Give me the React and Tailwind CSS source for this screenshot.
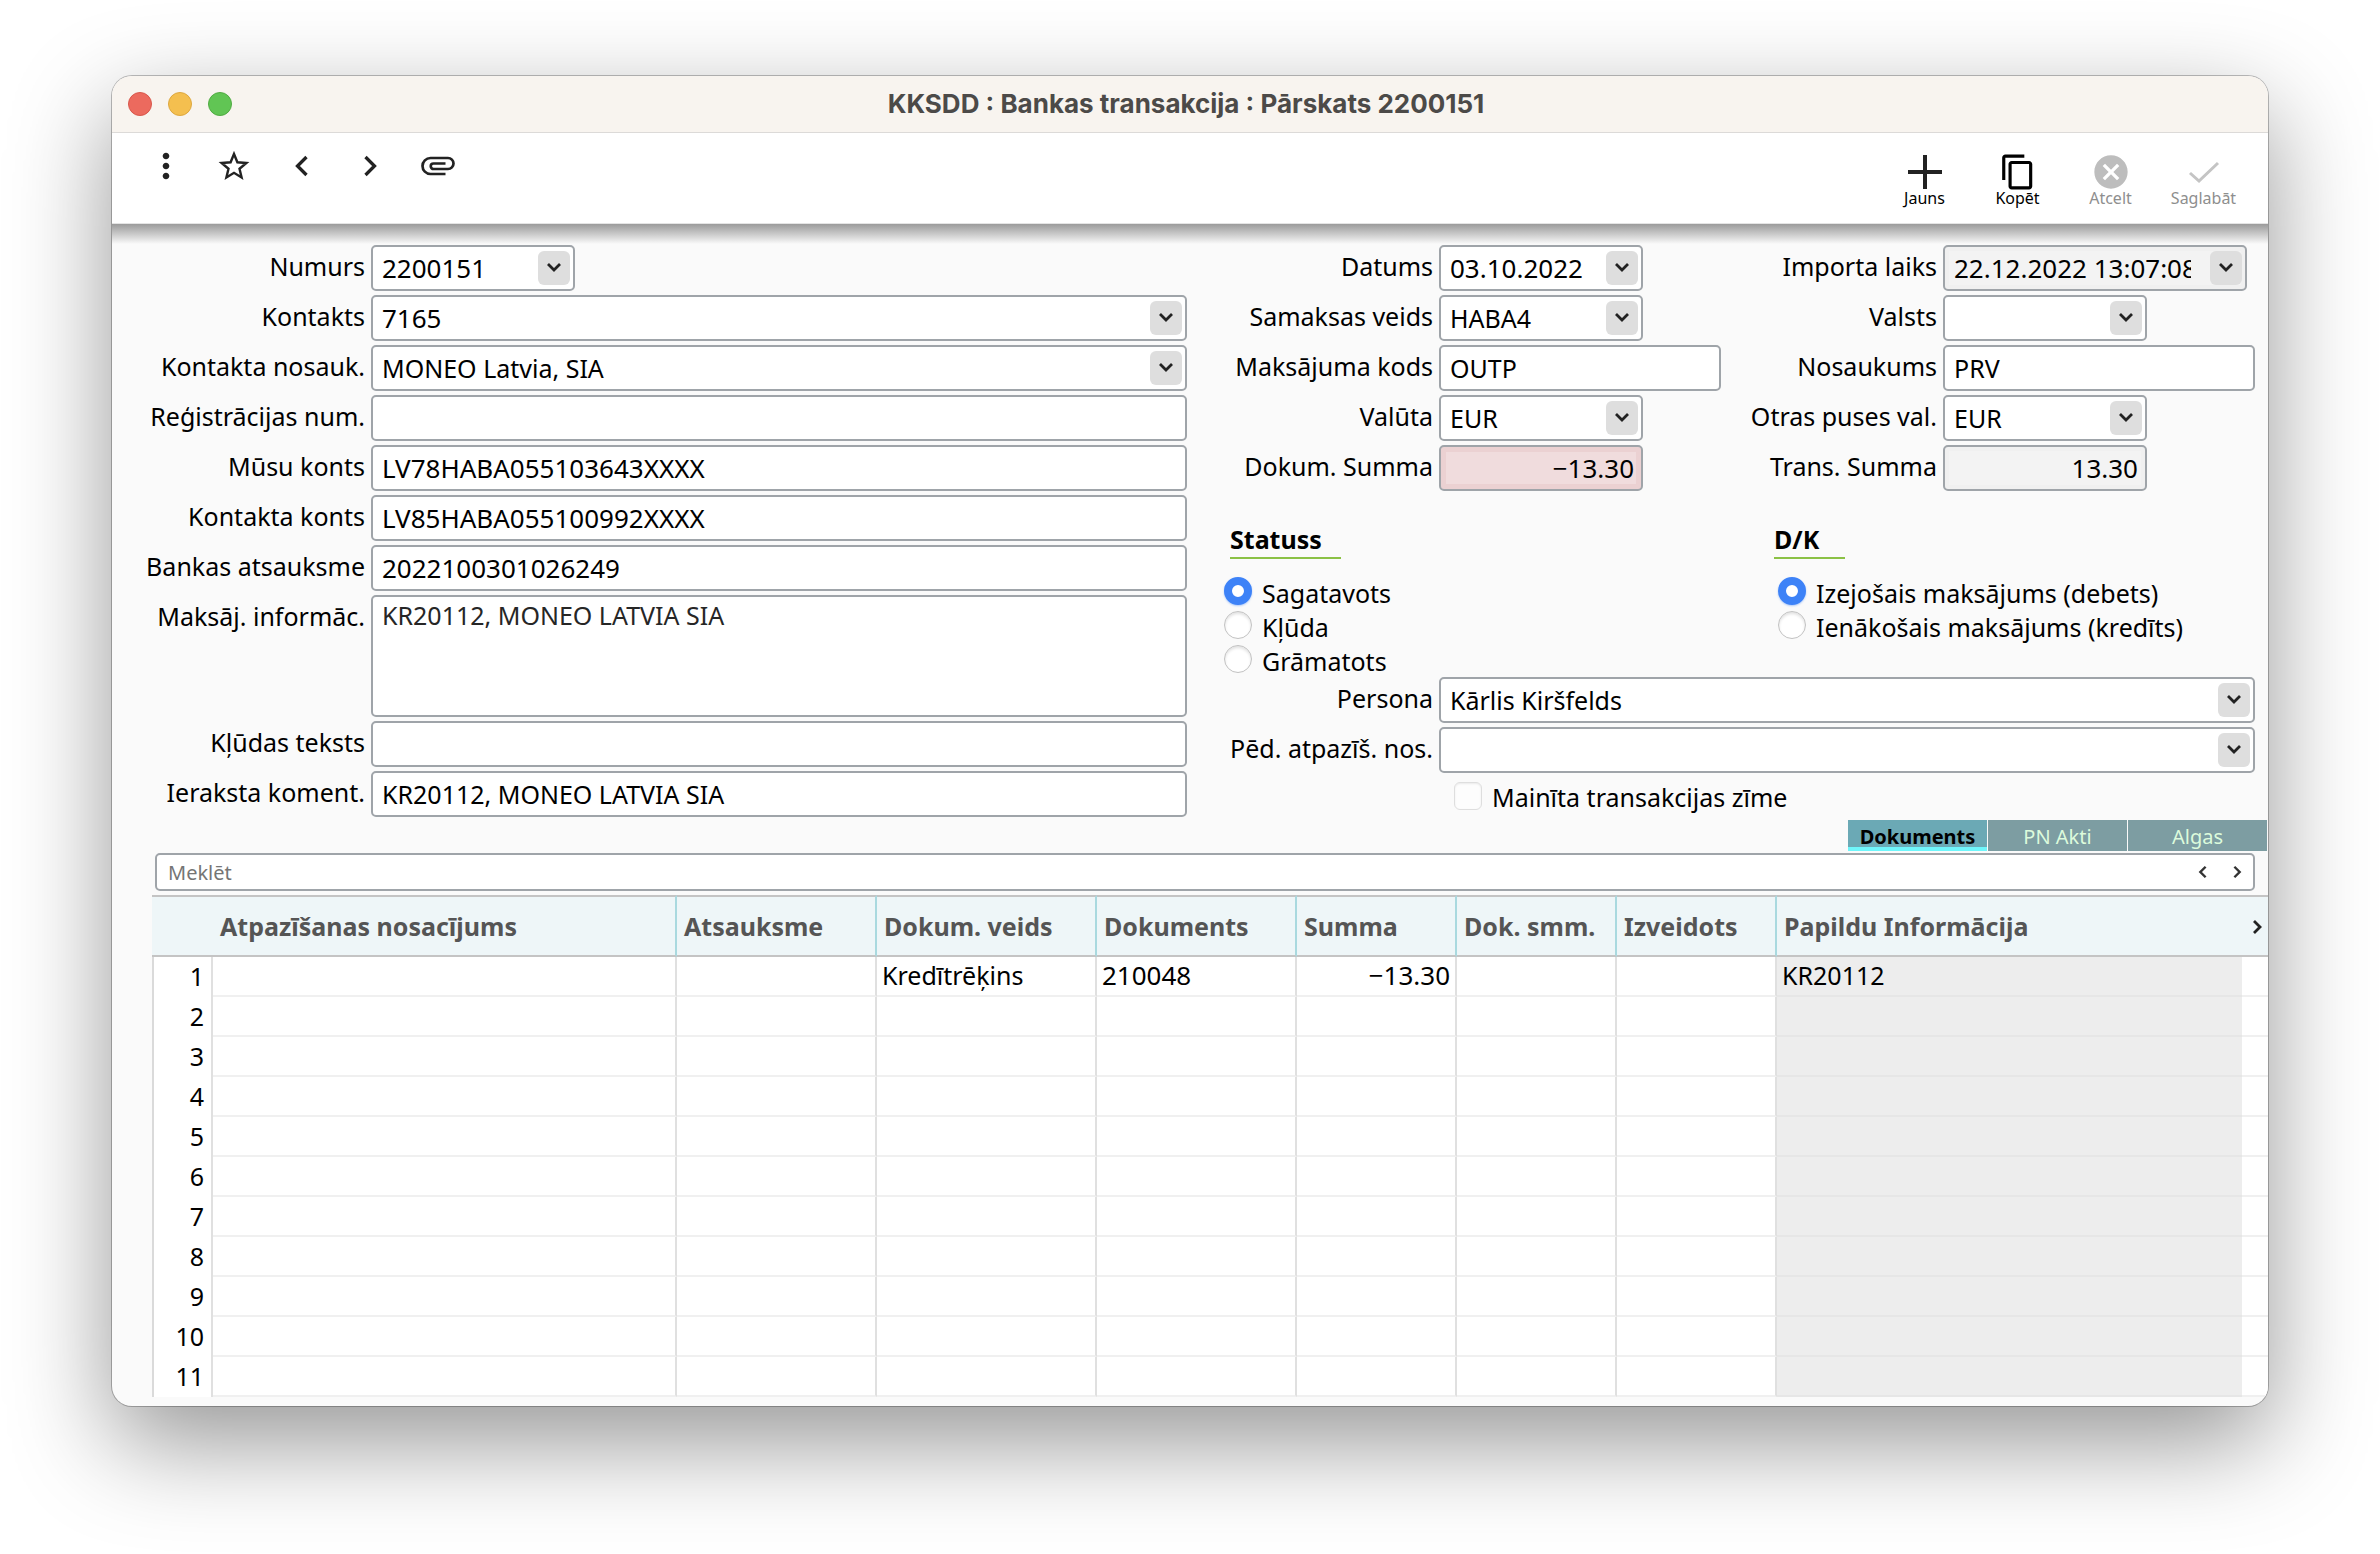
import React from "react";
import { MdMoreVert, MdContentCopy, MdCancel } from "react-icons/md";

function Chevron({ dir = "down", thin, className = "" }) {
  const d = {
    down: "M2 3 L8 9 L14 3",
    left: "M11 2 L5 8 L11 14",
    right: "M5 2 L11 8 L5 14",
  }[dir];
  return (
    <svg viewBox={dir === "down" ? "0 0 16 12" : "0 0 16 16"} className={className} fill="none" stroke="currentColor" strokeWidth={thin ? 2.2 : 2.8} aria-hidden="true">
      <path d={d} />
    </svg>
  );
}

function Star() {
  return (
    <svg viewBox="0 0 32 32" className="h-8 w-8" fill="none" stroke="currentColor" strokeWidth="2.4" aria-hidden="true">
      <path d="M16 4L19.4 12.3L28.4 13L21.5 18.8L23.6 27.5L16 22.8L8.4 27.5L10.5 18.8L3.6 13L12.6 12.3Z" />
    </svg>
  );
}

function Paperclip() {
  return (
    <svg viewBox="0 0 34 20" className="h-5 w-[34px]" fill="none" stroke="currentColor" strokeWidth="2.7" aria-hidden="true">
      <path d="M24.5 18H9.5A8 8 0 0 1 9.5 2H27A5.5 5.5 0 0 1 27 13H12.5A2.75 2.75 0 0 1 12.5 7.5H24.5" />
    </svg>
  );
}

const box =
  "block w-full h-[46px] rounded-[5px] border-2 border-[#9fa4a9] pl-[9px] leading-[42px] text-black outline-none";

function Field({ id, label, value = "", kind = "text", tone = "white", labelWidth, width = "w-full", align = "", numeric }) {
  const tones = {
    white: "bg-white",
    gray: "bg-[#f3f3f3] shadow-[inset_0_0_0_4px_#f0f0f0]",
    red: "bg-[#f0dcdd] shadow-[inset_0_0_0_5px_#ebd1d2]",
  };
  const size = numeric ? "text-[26px]" : "text-[25px]";
  return (
    <div className="flex items-start">
      <label htmlFor={id} className={`${labelWidth} shrink-0 whitespace-nowrap pr-[6px] text-right leading-[42px]`}>
        {label}
      </label>
      <div className="min-w-0 flex-1">
        <div className={`relative ${width}`}>
          {kind === "select" && (
            <>
              <select id={id} defaultValue={value} className={`${box} ${size} ${tones[tone]} appearance-none pr-[54px]`}>
                <option value={value}>{value}</option>
              </select>
              <span className="pointer-events-none absolute right-[5px] top-[6px] flex h-[34px] w-8 items-center justify-center rounded-md bg-[#dedede] pb-[2px] text-[#222]">
                <Chevron className="h-3 w-4" />
              </span>
            </>
          )}
          {kind === "text" && (
            <input id={id} type="text" defaultValue={value} className={`${box} ${size} ${tones[tone]} ${align} pr-[7px]`} />
          )}
          {kind === "area" && (
            <textarea
              id={id}
              defaultValue={value}
              className="block h-[122px] w-full resize-none rounded-[5px] border-2 border-[#9fa4a9] bg-white pl-[9px] text-[25px] leading-[36px] text-[#262626] outline-none"
            />
          )}
        </div>
      </div>
    </div>
  );
}

function Radios({ name, legend, legendWidth, options, indent }) {
  return (
    <fieldset>
      <legend className={`${legendWidth} mb-[18px] border-b-2 border-[#8bc145] pb-[2px] font-bold leading-[32px]`}>{legend}</legend>
      <div className={`flex flex-col gap-[2px] ${indent}`}>
        {options.map((o, i) => (
          <label key={o} className="flex h-8 items-start gap-[10px] whitespace-nowrap leading-[32px]">
            <input
              type="radio"
              name={name}
              defaultChecked={i === 0}
              className="h-7 w-7 shrink-0 appearance-none rounded-full border border-[#c2c2c2] bg-white shadow-[inset_0_2px_3px_rgba(0,0,0,0.12)] checked:border-[8px] checked:border-[#3d82f7] checked:shadow-[0_1px_2px_rgba(61,130,247,0.4)]"
            />
            {o}
          </label>
        ))}
      </div>
    </fieldset>
  );
}

function Action({ label, muted, children }) {
  return (
    <button type="button" className={`flex w-[93px] flex-col items-center ${muted ? "text-[#8e8e8e]" : "text-black"}`}>
      <span className="flex h-9 items-center justify-center">{children}</span>
      <span className="text-[16px] leading-[16px]">{label}</span>
    </button>
  );
}

const leftFields = [
  { id: "numurs", label: "Numurs", value: "2200151", kind: "select", width: "w-[204px]", numeric: true },
  { id: "kontakts", label: "Kontakts", value: "7165", kind: "select", numeric: true },
  { id: "nosauk", label: "Kontakta nosauk.", value: "MONEO Latvia, SIA", kind: "select" },
  { id: "regnum", label: "Reģistrācijas num." },
  { id: "musu", label: "Mūsu konts", value: "LV78HABA055103643XXXX", numeric: true },
  { id: "kkonts", label: "Kontakta konts", value: "LV85HABA055100992XXXX", numeric: true },
  { id: "atsauksme", label: "Bankas atsauksme", value: "2022100301026249", numeric: true },
  { id: "inform", label: "Maksāj. informāc.", value: "KR20112, MONEO LATVIA SIA", kind: "area" },
  { id: "kluda", label: "Kļūdas teksts" },
  { id: "koment", label: "Ieraksta koment.", value: "KR20112, MONEO LATVIA SIA" },
];

const midFields = [
  { id: "datums", label: "Datums", value: "03.10.2022", kind: "select", width: "w-[204px]", numeric: true },
  { id: "samaksa", label: "Samaksas veids", value: "HABA4", kind: "select", width: "w-[204px]" },
  { id: "kods", label: "Maksājuma kods", value: "OUTP" },
  { id: "valuta", label: "Valūta", value: "EUR", kind: "select", width: "w-[204px]" },
  { id: "dsumma", label: "Dokum. Summa", value: "−13.30", tone: "red", align: "text-right", width: "w-[204px]", numeric: true },
];

const rightFields = [
  { id: "imports", label: "Importa laiks", value: "22.12.2022 13:07:08", kind: "select", tone: "gray", width: "w-[304px]", numeric: true },
  { id: "valsts", label: "Valsts", kind: "select", width: "w-[204px]" },
  { id: "nosaukums", label: "Nosaukums", value: "PRV" },
  { id: "otras", label: "Otras puses val.", value: "EUR", kind: "select", width: "w-[204px]" },
  { id: "tsumma", label: "Trans. Summa", value: "13.30", tone: "gray", align: "text-right", width: "w-[204px]", numeric: true },
];

const columns = [
  { name: "Atsauksme", w: "w-[200px]" },
  { name: "Dokum. veids", w: "w-[220px]", value: "Kredītrēķins" },
  { name: "Dokuments", w: "w-[200px]", value: "210048", cell: "text-[26px]" },
  { name: "Summa", w: "w-[160px]", value: "−13.30", cell: "pr-[5px] text-right text-[26px]" },
  { name: "Dok. smm.", w: "w-[160px]" },
  { name: "Izveidots", w: "w-[160px]" },
];

const tabs = ["Dokuments", "PN Akti", "Algas"];
const rows = Array.from({ length: 11 }, (_, i) => i + 1);

export default function App() {
  return (
    <div className="min-h-screen bg-white px-28 pb-[148px] pt-[76px] font-['Noto_Sans','Open_Sans',sans-serif] text-[25px] text-black">
      <main className="overflow-hidden rounded-[20px] bg-[#fafafa] shadow-[0_0_0_1px_rgba(0,0,0,0.25),0_36px_100px_rgba(0,0,0,0.42)]">
        <header className="grid h-[57px] grid-cols-[1fr_auto_1fr] items-center border-b border-[#dcdad8] bg-[#f8f4ef] px-4">
          <div className="flex gap-4">
            <button type="button" aria-label="Aizvērt" className="h-6 w-6 rounded-full border border-[#d8574c] bg-[#ec6a5e]" />
            <button type="button" aria-label="Minimizēt" className="h-6 w-6 rounded-full border border-[#dda73f] bg-[#f4bf4f]" />
            <button type="button" aria-label="Palielināt" className="h-6 w-6 rounded-full border border-[#51ab43] bg-[#61c554]" />
          </div>
          <h1 className="whitespace-nowrap pr-2 font-['Inter',sans-serif] text-[26px] font-bold leading-8 text-[#4c4a48]">
            KKSDD : Bankas transakcija : Pārskats 2200151
          </h1>
        </header>

        <div className="flex h-[91px] justify-between border-b border-[#e4e4e4] bg-white pl-5 pr-[18px]">
          <nav className="flex h-[66px] items-center text-[#222]">
            <button type="button" aria-label="Izvēlne" className="flex w-[68px] justify-center"><MdMoreVert className="h-10 w-10" /></button>
            <button type="button" aria-label="Izlase" className="flex w-[68px] justify-center"><Star /></button>
            <button type="button" aria-label="Iepriekšējais" className="flex w-[68px] justify-center"><Chevron dir="left" thin className="h-6 w-6" /></button>
            <button type="button" aria-label="Nākamais" className="flex w-[68px] justify-center"><Chevron dir="right" thin className="h-6 w-6" /></button>
            <button type="button" aria-label="Pielikumi" className="flex w-[68px] justify-center"><Paperclip /></button>
          </nav>
          <div className="flex items-start pt-[21px]">
            <Action label="Jauns">
              <svg viewBox="0 0 36 36" className="h-9 w-9" stroke="#222" strokeWidth="4" aria-hidden="true"><path d="M18 1V35M1 18H35" /></svg>
            </Action>
            <Action label="Kopēt"><MdContentCopy className="h-[38px] w-[38px]" /></Action>
            <Action label="Atcelt" muted><MdCancel className="h-10 w-10 text-[#bdbdbd]" /></Action>
            <Action label="Saglabāt" muted>
              <svg viewBox="0 0 32 24" className="h-6 w-8" stroke="#c4c4c4" strokeWidth="3" fill="none" aria-hidden="true"><path d="M2 13L11 21L30 3" /></svg>
            </Action>
          </div>
        </div>
        <div className="h-[20px] bg-linear-to-b from-[#9b9b9b] to-[#fafafa]" />

        <form className="grid grid-cols-[1041fr_1031fr] gap-x-[37px] pl-[34px] pr-[13px] pt-px">
          <div className="flex flex-col gap-1">
            {leftFields.map((f) => <Field key={f.id} labelWidth="w-[225px]" {...f} />)}
          </div>
          <div>
            <div className="grid grid-cols-[497px_1fr]">
              <div className="flex flex-col gap-1">
                {midFields.map((f) => <Field key={f.id} labelWidth="w-[215px]" {...f} />)}
              </div>
              <div className="flex flex-col gap-1">
                {rightFields.map((f) => <Field key={f.id} labelWidth="w-[222px]" {...f} />)}
              </div>
              <div className="pl-[6px] pt-8">
                <Radios name="status" legend="Statuss" legendWidth="w-[111px]" options={["Sagatavots", "Kļūda", "Grāmatots"]} indent="-ml-[6px]" />
              </div>
              <div className="pl-[53px] pt-8">
                <Radios name="dk" legend="D/K" legendWidth="w-[71px]" options={["Izejošais maksājums (debets)", "Ienākošais maksājums (kredīts)"]} indent="pl-1" />
              </div>
            </div>
            <div className="flex flex-col gap-1">
              <Field id="persona" label="Persona" value="Kārlis Kiršfelds" kind="select" labelWidth="w-[215px]" />
              <Field id="ped" label="Pēd. atpazīš. nos." kind="select" labelWidth="w-[215px]" />
            </div>
            <label className="ml-[230px] mt-[9px] flex h-[38px] items-start gap-[10px] leading-[30px]">
              <input type="checkbox" className="h-7 w-7 shrink-0 appearance-none rounded-md border border-[#dedede] bg-[#fdfdfd] shadow-[inset_0_1px_2px_rgba(0,0,0,0.08)]" />
              Mainīta transakcijas zīme
            </label>
          </div>
        </form>

        <div role="tablist" className="flex h-[31px] justify-end gap-px pr-px text-[20px] leading-[31px]">
          {tabs.map((t, i) => (
            <button
              key={t}
              type="button"
              role="tab"
              aria-selected={i === 0}
              className={`w-[139px] ${i === 0 ? "border-b-4 border-[#6ff6fb] bg-[#6ba9b5] pt-[3px] font-bold leading-[27px] text-black" : "bg-[#7d9da2] pt-px text-[#dcfbdc]"}`}
            >
              {t}
            </button>
          ))}
        </div>

        <div className="ml-[43px] mr-[13px] mt-[2px] flex h-[38px] items-center rounded-[5px] border-2 border-[#9fa4a9] bg-white">
          <input type="search" aria-label="Meklēt" placeholder="Meklēt" className="h-full min-w-0 flex-1 bg-transparent pl-[11px] text-[20px] outline-none placeholder:text-[#757575]" />
          <div className="flex">
            <button type="button" aria-label="Iepriekšējais rezultāts" className="flex w-9 justify-center text-[#333]"><Chevron dir="left" className="h-[14px] w-[14px]" /></button>
            <button type="button" aria-label="Nākamais rezultāts" className="flex w-8 justify-center text-[#333]"><Chevron dir="right" className="h-[14px] w-[14px]" /></button>
          </div>
        </div>

        <div className="mb-[9px] ml-10 mt-1">
          <table className="w-full table-fixed border-separate border-spacing-0">
            <thead>
              <tr className="h-[62px] bg-[#eef6f8] text-left text-[25px] text-[#555] [&>th]:border-y-2 [&>th]:border-y-[#c4c4c4] [&>th]:pl-[7px] [&>th]:pt-[2px]">
                <th scope="col" className="w-[61px]" aria-label="Nr." />
                <th scope="col" className="border-r-2 border-r-[#a9d9df]">Atpazīšanas nosacījums</th>
                {columns.map((c) => (
                  <th key={c.name} scope="col" className={`${c.w} whitespace-nowrap border-r-2 border-r-[#a9d9df]`}>{c.name}</th>
                ))}
                <th scope="col" className="w-[465px]">Papildu Informācija</th>
                <th scope="col" className="w-[26px]">
                  <button type="button" aria-label="Nākamās kolonnas" className="block text-[#222]"><Chevron dir="right" className="h-4 w-4" /></button>
                </th>
              </tr>
            </thead>
            <tbody className="bg-white">
              {rows.map((n) => (
                <tr key={n} className="h-10 leading-[34px] [&>*]:pb-[3px] [&>td]:border-b-2 [&>td]:border-b-[#f0f0f0] [&>td]:pl-[5px]">
                  <th scope="row" className="border-l-2 border-r-2 border-l-[#dadada] border-r-[#e0e0e0] pr-[7px] text-right font-normal">{n}</th>
                  <td className="border-r-2 border-r-[#e0e0e0]" />
                  {columns.map((c) => (
                    <td key={c.name} className={`whitespace-nowrap border-r-2 border-r-[#e0e0e0] ${c.cell || ""}`}>
                      {n === 1 ? c.value : null}
                    </td>
                  ))}
                  <td className="bg-[#ededed] [&&]:border-b-[#e6e6e6]">{n === 1 ? "KR20112" : null}</td>
                  <td />
                </tr>
              ))}
            </tbody>
          </table>
        </div>
      </main>
    </div>
  );
}
